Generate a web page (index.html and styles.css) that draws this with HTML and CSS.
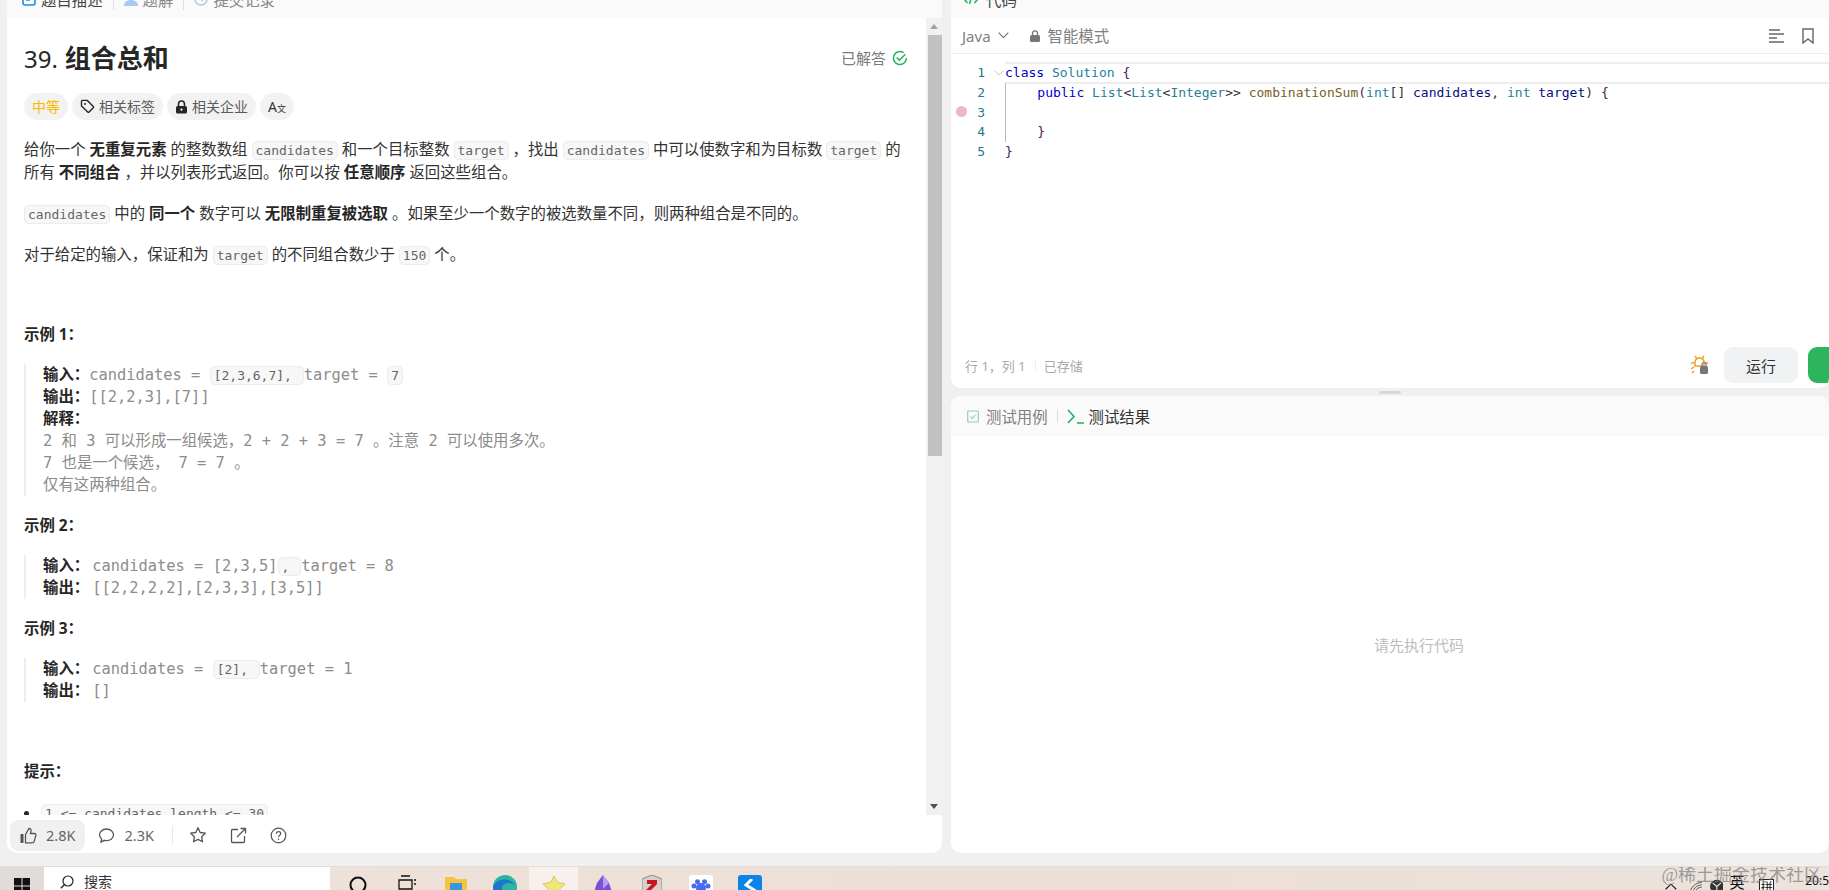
FILE: index.html
```html
<!DOCTYPE html>
<html lang="zh-CN">
<head>
    <meta charset="UTF-8">
    <title>39. 组合总和</title>
    <link rel="stylesheet" href="styles.css">
</head>
<body>
    <div class="main">
        <!-- pannello sinistro: descrizione -->
        <section class="panel-left">
            <div class="strip">
                <div class="tab">
                    <svg class="icon-tab" viewBox="0 0 14 14"><rect x="1" y="1" width="12" height="12" rx="2" fill="none" stroke="#1a90e0" stroke-width="1.6"/><path d="M4 5h6M4 8h4" stroke="#1a90e0" stroke-width="1.4"/></svg>
                    <span class="tab-text">题目描述</span>
                </div>
                <i class="tab-sep"></i>
                <div class="tab">
                    <svg class="icon-tab" viewBox="0 0 14 14"><circle cx="7" cy="4" r="3.4" fill="#a9c9f0"/><path d="M0 14c0-4 3-6 7-6s7 2 7 6z" fill="#a9c9f0"/></svg>
                    <span class="tab-text tab-dim">题解</span>
                </div>
                <i class="tab-sep"></i>
                <div class="tab">
                    <svg class="icon-tab" viewBox="0 0 14 14"><path d="M7 1a6 6 0 1 1-6 6" fill="none" stroke="#a9c9f0" stroke-width="1.5"/><path d="M7 4v3l2 2" fill="none" stroke="#a9c9f0" stroke-width="1.4"/></svg>
                    <span class="tab-text tab-dim">提交记录</span>
                </div>
            </div>

            <div class="desc-wrap">
                <div class="desc">
                    <div class="title-row">
                        <h1 class="title"><span class="title-num">39.</span> 组合总和</h1>
                        <div class="solved">
                            已解答
                            <svg width="16" height="16" viewBox="0 0 16 16"><path d="M14.5 8A6.5 6.5 0 1 1 11.6 2.6" fill="none" stroke="#1db45a" stroke-width="1.5"/><path d="M4.8 7.6l2.6 2.6 6-6" fill="none" stroke="#1db45a" stroke-width="1.5"/></svg>
                        </div>
                    </div>

                    <div class="tags">
                        <span class="tag tag-level">中等</span>
                        <span class="tag">
                            <svg width="15" height="15" viewBox="0 0 15 15"><path d="M1.5 2.2a.8.8 0 0 1 .8-.8h5l6 6a1 1 0 0 1 0 1.4l-4.2 4.2a1 1 0 0 1-1.4 0l-6.2-6z" fill="none" stroke="#262626" stroke-width="1.4"/><circle cx="5" cy="5" r="1" fill="#262626"/></svg>
                            相关标签
                        </span>
                        <span class="tag">
                            <svg width="13" height="14" viewBox="0 0 13 14"><path d="M3.5 6V4a3 3 0 0 1 6 0v2" fill="none" stroke="#262626" stroke-width="1.6"/><rect x="1" y="6" width="11" height="7.5" rx="1.6" fill="#262626"/><circle cx="6.5" cy="9.7" r="1.1" fill="#fff"/></svg>
                            相关企业
                        </span>
                        <span class="tag tag-lang">A<small>文</small></span>
                    </div>

                    <p>给你一个 <b>无重复元素</b> 的整数数组 <code>candidates</code> 和一个目标整数 <code>target</code> &#65292;找出 <code>candidates</code> 中可以使数字和为目标数 <code>target</code> 的<br>所有 <b>不同组合</b> &#65292;并以列表形式返回。你可以按 <b>任意顺序</b> 返回这些组合。</p>
                    <p><code>candidates</code> 中的 <b>同一个</b> 数字可以 <b>无限制重复被选取</b> 。如果至少一个数字的被选数量不同&#65292;则两种组合是不同的。</p>
                    <p>对于给定的输入&#65292;保证和为 <code>target</code> 的不同组合数少于 <code>150</code> 个。</p>

                    <h4 class="example-title first">示例 1&#65306;</h4>
                    <pre class="example"><strong>输入&#65306;</strong>candidates = <code>[2,3,6,7], </code>target = <code>7</code>
<strong>输出&#65306;</strong>[[2,2,3],[7]]
<strong>解释&#65306;</strong>
2 和 3 可以形成一组候选&#65292;2 + 2 + 3 = 7 。注意 2 可以使用多次。
7 也是一个候选&#65292; 7 = 7 。
仅有这两种组合。</pre>

                    <h4 class="example-title">示例 2&#65306;</h4>
                    <pre class="example"><strong class="label-gap">输入&#65306;</strong>candidates = [2,3,5]<code>, </code>target = 8
<strong class="label-gap">输出&#65306;</strong>[[2,2,2,2],[2,3,3],[3,5]]</pre>

                    <h4 class="example-title">示例 3&#65306;</h4>
                    <pre class="example"><strong class="label-gap">输入&#65306;</strong>candidates = <code>[2], </code>target = 1
<strong class="label-gap">输出&#65306;</strong>[]</pre>

                    <h4 class="example-title hint">提示&#65306;</h4>
                    <ul class="hints">
                        <li><code>1 &lt;= candidates.length &lt;= 30</code></li>
                    </ul>
                </div>
                <div class="scrollbar">
                    <div class="scroll-btn"><i class="arrow-up"></i></div>
                    <div class="scroll-thumb"></div>
                    <div class="scroll-rest"></div>
                    <div class="scroll-btn"><i class="arrow-down"></i></div>
                </div>
            </div>

            <div class="actions">
                <div class="action action-like">
                    <svg width="17" height="17" viewBox="0 0 17 17"><rect x="0.5" y="7" width="3" height="9" rx="0.8" fill="#555"/><path d="M5.5 7.5L9 1.5c1.5 0 2.2 1 2 2.4L10.5 6.5h4c1 0 1.7.9 1.4 1.9l-1.8 6.2c-.2.8-.9 1.3-1.7 1.3H5.5z" fill="none" stroke="#555" stroke-width="1.3"/></svg>
                    2.8K
                </div>
                <div class="action">
                    <svg width="17" height="17" viewBox="0 0 17 17"><path d="M8.5 2C4.5 2 1.5 4.5 1.5 7.8c0 1.7.8 3.1 2.1 4.2L3 15l3.4-1.7c.7.2 1.4.3 2.1.3 4 0 7-2.5 7-5.8S12.5 2 8.5 2z" fill="none" stroke="#555" stroke-width="1.3"/></svg>
                    2.3K
                </div>
                <i class="action-sep"></i>
                <svg class="action-icon" width="18" height="18" viewBox="0 0 18 18"><path d="M9 1.8l2.2 4.7 5.1.7-3.7 3.5.9 5.1L9 13.4l-4.5 2.4.9-5.1L1.7 7.2l5.1-.7z" fill="none" stroke="#555" stroke-width="1.3" stroke-linejoin="round"/></svg>
                <svg class="action-icon" width="17" height="17" viewBox="0 0 17 17"><path d="M8 2.5H2.5a1 1 0 0 0-1 1v11a1 1 0 0 0 1 1h11a1 1 0 0 0 1-1V9M7 10l8.5-8.5M10.5 1.5h5v5" fill="none" stroke="#555" stroke-width="1.3"/></svg>
                <svg class="action-icon" width="17" height="17" viewBox="0 0 17 17"><circle cx="8.5" cy="8.5" r="7.3" fill="none" stroke="#555" stroke-width="1.2"/><path d="M6.3 6.7c0-1.3 1-2.1 2.2-2.1s2.2.8 2.2 2c0 1.8-2.2 1.7-2.2 3.6" fill="none" stroke="#555" stroke-width="1.2"/><circle cx="8.5" cy="12.3" r=".8" fill="#555"/></svg>
            </div>
        </section>

        <!-- pannello destro: editor e test -->
        <section class="panel-right">
            <div class="panel-code">
                <div class="strip">
                    <div class="tab tab-code">
                        <svg class="icon-code" viewBox="0 0 16 12"><path d="M4.5 2L1 6l3.5 4M11.5 2L15 6l-3.5 4M9.5 1L6.5 11" fill="none" stroke="#1db45a" stroke-width="1.5"/></svg>
                        <span class="tab-text">代码</span>
                    </div>
                </div>

                <div class="toolbar">
                    <span class="lang">Java</span>
                    <svg class="chevron" width="11" height="7" viewBox="0 0 11 7"><path d="M.7.7l4.8 5 4.8-5" fill="none" stroke="#777" stroke-width="1.2"/></svg>
                    <svg class="lock" width="10" height="12" viewBox="0 0 10 12"><path d="M2.5 5V3.3a2.5 2.5 0 0 1 5 0V5" fill="none" stroke="#777" stroke-width="1.3"/><rect y="5" width="10" height="7" rx="1.5" fill="#777"/></svg>
                    <span class="mode">智能模式</span>
                    <svg class="tool-a" width="15" height="14" viewBox="0 0 15 14"><path d="M0 1h11M0 5h15M0 9h8M0 13h15" stroke="#666" stroke-width="1.3"/></svg>
                    <svg class="tool-b" width="12" height="16" viewBox="0 0 12 16"><path d="M1 1h10v14l-5-4-5 4z" fill="none" stroke="#666" stroke-width="1.4"/></svg>
                </div>

                <div class="editor">
                    <div class="line">
                        <span class="ln">1</span><svg class="fold" width="10" height="6" viewBox="0 0 10 6"><path d="M.5.5L5 5 9.5.5" fill="none" stroke="#c8c8c8"/></svg>
                        <code class="src src-active"><span class="kw">class</span> <span class="ty">Solution</span> <span class="br">{</span></code>
                    </div>
                    <div class="line">
                        <span class="ln">2</span>
                        <code class="src src-guide">    <span class="kw">public</span> <span class="ty">List</span>&lt;<span class="ty">List</span>&lt;<span class="ty">Integer</span>&gt;&gt; <span class="fn">combinationSum</span><span class="br">(</span><span class="ty">int</span>[] <span class="va">candidates</span>, <span class="ty">int</span> <span class="va">target</span><span class="br">)</span> <span class="br">{</span></code>
                    </div>
                    <div class="line">
                        <i class="breakpoint"></i><span class="ln">3</span>
                        <code class="src src-guide"> </code>
                    </div>
                    <div class="line">
                        <span class="ln">4</span>
                        <code class="src src-guide">    <span class="br">}</span></code>
                    </div>
                    <div class="line">
                        <span class="ln">5</span>
                        <code class="src"><span class="br">}</span></code>
                    </div>
                </div>

                <div class="statusbar">
                    <span class="status">行 1&#65292;列 1</span>
                    <i class="status-sep"></i>
                    <span class="status">已存储</span>
                    <svg class="bug" width="20" height="20" viewBox="0 0 20 20"><path d="M7 4L5 1M12 4l2-3M4 8H1M4 12l-3 2M4 16l-2 2M15 8h3" stroke="#f0a020" stroke-width="1.5" fill="none"/><path d="M5 7c0-2 2-4 4.5-4S14 5 14 7v4H5z" fill="none" stroke="#f0a020" stroke-width="1.5"/><rect x="10" y="11" width="8" height="8" rx="1.5" fill="#777"/><path d="M12 11V9.5a2 2 0 0 1 4 0V11" fill="none" stroke="#777" stroke-width="1.2"/></svg>
                    <button class="btn-run">运行</button>
                    <button class="btn-submit"></button>
                </div>
            </div>

            <div class="handle"><i></i></div>

            <div class="panel-test">
                <div class="test-tabs">
                    <svg width="12" height="13" viewBox="0 0 12 13"><rect x=".7" y="1" width="10.6" height="11" rx="1" fill="none" stroke="#8fd4a8" stroke-width="1.2"/><path d="M3.5 6.5l2 2 3-3.5" fill="none" stroke="#8fd4a8" stroke-width="1.1"/></svg>
                    <span class="test-tab test-dim">测试用例</span>
                    <i class="test-sep"></i>
                    <svg class="icon-term" width="17" height="15" viewBox="0 0 17 15"><path d="M1 1l6 6.500L1 14M10 14h7" fill="none" stroke="#1db45a" stroke-width="1.6"/></svg>
                    <span class="test-tab">测试结果</span>
                </div>
                <div class="test-body">请先执行代码</div>
            </div>
        </section>
    </div>

    <!-- barra di windows in basso -->
    <footer class="taskbar">
        <div class="start">
            <svg width="16" height="16" viewBox="0 0 16 16"><path d="M0 0h7.5v7.5H0zM8.5 0H16v7.5H8.5zM0 8.5h7.5V16H0zM8.5 8.5H16V16H8.5z" fill="#111"/></svg>
        </div>
        <div class="search">
            <svg width="14" height="14" viewBox="0 0 14 14"><circle cx="8" cy="6" r="5" fill="none" stroke="#222" stroke-width="1.2"/><path d="M4.5 9.5L.8 13.3" stroke="#222" stroke-width="1.3"/></svg>
            <span>搜索</span>
        </div>
        <div class="apps">
            <div class="app"><svg width="20" height="20" viewBox="0 0 20 20"><circle cx="10" cy="10" r="7.5" fill="none" stroke="#111" stroke-width="2"/></svg></div>
            <div class="app"><svg width="18" height="18" viewBox="0 0 18 18"><path d="M1 5h13v9H1zM3 1h9M16 5h2M16 9h2" fill="none" stroke="#111" stroke-width="1.3"/></svg></div>
            <div class="app"><svg width="22" height="20" viewBox="0 0 22 20"><path d="M0 2h9l2 2h11v16H0z" fill="#f5c542"/><rect x="5" y="8" width="12" height="12" fill="#3a96dd"/></svg></div>
            <div class="app"><svg width="24" height="24" viewBox="0 0 24 24"><circle cx="12" cy="12" r="12" fill="#2ab5a5"/><path d="M0 12C2 3 18 2 22 10c-4-3-12-3-13 3 0 4 4 8 9 8-9 6-18-1-18-9z" fill="#1d78c8"/></svg></div>
            <div class="app app-active"><svg width="24" height="22" viewBox="0 0 24 22"><path d="M12 1l3.5 6.5 7.5 1.3-5.3 5.3L19 22 12 18.5 5 22l1.3-7.9L1 8.800l7.500-1.300z" fill="#f0e678" stroke="#d8c860"/></svg></div>
            <div class="app"><svg width="18" height="24" viewBox="0 0 18 24"><path d="M9 0l6 8 3 9-9 7-9-7 3-9z" fill="#7b4fd8"/><path d="M9 0l6 8-6 6z" fill="#b79cf0"/></svg></div>
            <div class="app"><svg width="20" height="24" viewBox="0 0 20 24"><path d="M10 0l10 4v16H0V4z" fill="#d8d0cc" stroke="#888"/><path d="M5 5h10v4l-6 6h6v4H4v-4l6-6H5z" fill="#c8161d"/></svg></div>
            <div class="app"><div class="app-tile app-tile-white"><svg width="20" height="14" viewBox="0 0 20 14"><circle cx="10" cy="9" r="5" fill="#4a6af0"/><circle cx="3" cy="7" r="2.5" fill="#4a6af0"/><circle cx="17" cy="7" r="2.5" fill="#4a6af0"/><circle cx="6.5" cy="2.8" r="2.5" fill="#4a6af0"/><circle cx="13.5" cy="2.8" r="2.5" fill="#4a6af0"/></svg></div></div>
            <div class="app"><div class="app-tile app-tile-blue"><svg width="14" height="20" viewBox="0 0 14 20"><path d="M9 0L3 6l8 5-6 8" fill="none" stroke="#fff" stroke-width="3"/></svg></div></div>
        </div>
        <div class="tray">
            <svg width="13" height="7" viewBox="0 0 13 7"><path d="M.7 6.5L6.5 1l5.8 5.5" fill="none" stroke="#111" stroke-width="1.2"/></svg>
            <svg class="tray-wifi" width="14" height="14" viewBox="0 0 16 16"><path d="M1 16C1 8 8 1 16 1M4 16c0-6 6-12 12-12M7 16c0-5 4-9 9-9" fill="none" stroke="#333" stroke-width="1"/></svg>
            <svg class="tray-ball" width="15" height="15" viewBox="0 0 15 15"><circle cx="7.5" cy="7.5" r="7.5" fill="#333"/><path d="M7.5 7.5L3 3.5M7.5 7.5l4.5-4M7.5 7.5V14" stroke="#eee" stroke-width="1.2"/></svg>
            <span class="tray-ime">英</span>
            <span class="tray-box">拼</span>
            <span class="tray-time">20:5</span>
        </div>
        <div class="watermark">@稀土掘金技术社区</div>
    </footer>
</body>
</html>
```

FILE: styles.css
```css
* {
    box-sizing: border-box;
}

html, body {
    margin: 0;
    height: 890px;
    overflow: hidden;
}

body {
    width: 1829px;
    display: flex;
    flex-direction: column;
    background-color: #f0f0f0;
    color: #262626;
    font-family: "Noto Sans", "Noto Sans CJK SC", sans-serif;
    font-size: 15.4px;
}

.main {
    height: 866px;
    display: flex;
    padding: 0 0 13px 7px;
    gap: 9px;
}

/* pannelli */
.panel-left {
    width: 935px;
    display: flex;
    flex-direction: column;
    background-color: #fff;
    border-radius: 0 0 10px 10px;
    overflow: hidden;
}

.panel-right {
    flex: 1;
    display: flex;
    flex-direction: column;
    min-width: 0;
}

.panel-code {
    height: 388px;
    display: flex;
    flex-direction: column;
    background-color: #fff;
    border-radius: 0 0 10px 10px;
    overflow: hidden;
}

.panel-test {
    flex: 1;
    display: flex;
    flex-direction: column;
    background-color: #fff;
    border-radius: 10px;
    overflow: hidden;
}

/* striscia delle schede, tagliata in alto */
.strip {
    height: 18px;
    flex-shrink: 0;
    display: flex;
    align-items: flex-end;
    padding-left: 15px;
    background-color: #fafafa;
    overflow: hidden;
}

.tab {
    display: flex;
    align-items: center;
    gap: 5px;
    height: 24px;
    margin-bottom: 7px;
    flex-shrink: 0;
}

.tab-code {
    gap: 7px;
    margin-left: -3px;
}

.icon-tab {
    width: 14px;
    height: 14px;
}

.icon-code {
    width: 16px;
    height: 12px;
}

.tab-text {
    color: #444;
}

.tab-dim {
    color: #888;
}

.tab-sep {
    width: 1px;
    height: 14px;
    margin: 0 10px 8px 10px;
    background-color: #e0e0e0;
    flex-shrink: 0;
}

/* descrizione */
.desc-wrap {
    flex: 1;
    min-height: 0;
    display: flex;
    overflow: hidden;
}

.desc {
    flex: 1;
    min-width: 0;
    padding: 24px 17px 0 17px;
    overflow: hidden;
    line-height: 23px;
}

.title-row {
    display: flex;
    justify-content: space-between;
    align-items: center;
    height: 32px;
    padding-right: 1px;
}

.title {
    margin: 0;
    font-size: 26px;
    font-weight: 700;
    line-height: 32px;
}

.title-num {
    font-size: 24px;
    font-weight: 400;
}

.solved {
    display: flex;
    align-items: center;
    gap: 6px;
    color: #7a7a7a;
    font-size: 15px;
}

.tags {
    display: flex;
    gap: 4px;
    margin: 19px 0 18px;
}

.tag {
    display: flex;
    align-items: center;
    gap: 4px;
    height: 27px;
    padding: 0 8px;
    border-radius: 14px;
    background-color: #f2f2f2;
    color: #5c5c5c;
    font-size: 14px;
}

.tag-level {
    color: #ffb800;
}

.tag-lang {
    gap: 0;
    color: #333;
}

.tag-lang small {
    font-size: 9px;
    margin-top: 3px;
}

.desc p {
    margin: 0 0 18px;
    color: #333;
}

.desc b {
    color: #262626;
}

code {
    font-family: "DejaVu Sans Mono", monospace;
}

.desc code {
    padding: 1px 3px;
    font-size: 13px;
    line-height: 1;
    color: #666;
    background-color: #f7f7f7;
    border: 1px solid #ececec;
    border-radius: 5px;
}

.example-title {
    margin: 0 0 18px;
    font-size: 15.4px;
    font-weight: 700;
    line-height: 23px;
}

.example-title.first {
    margin-top: 57px;
}

.example-title.hint {
    margin-top: 58px;
}

.example {
    margin: 0 0 18px;
    padding-left: 17px;
    border-left: 2px solid #eee;
    font-family: "DejaVu Sans Mono", "Noto Sans CJK SC", monospace;
    font-size: 15.4px;
    line-height: 22px;
    color: #8c8c8c;
}

.example strong {
    font-family: "Noto Sans CJK SC", sans-serif;
    line-height: 1;
    color: #262626;
}

.example strong.label-gap {
    margin-right: 3px;
}

.hints {
    margin: 0;
    padding-left: 17px;
}

/* scrollbar finta */
.scrollbar {
    width: 16px;
    display: flex;
    flex-direction: column;
    background-color: #f1f1f1;
    flex-shrink: 0;
}

.scroll-btn {
    height: 17px;
    display: flex;
    align-items: center;
    justify-content: center;
}

.arrow-up {
    border: 4px solid transparent;
    border-top: 0;
    border-bottom: 5px solid #a3a3a3;
}

.arrow-down {
    border: 4px solid transparent;
    border-bottom: 0;
    border-top: 5px solid #505050;
}

.scroll-thumb {
    height: 421px;
    margin-left: 2px;
    background-color: #c1c1c1;
}

.scroll-rest {
    flex: 1;
}

/* azioni in fondo */
.actions {
    height: 38px;
    flex-shrink: 0;
    display: flex;
    align-items: center;
    padding: 2px 0 0 3px;
    color: #666;
    font-size: 14.5px;
}

.action {
    display: flex;
    align-items: center;
    gap: 9px;
    height: 31px;
    padding: 0 10px;
    margin-right: 3px;
}

.action-like {
    background-color: #f0f0f0;
    border-radius: 8px;
}

.action-sep {
    width: 1px;
    height: 18px;
    margin: 0 16px 0 5px;
    background-color: #e8e8e8;
}

.action-icon {
    margin-right: 23px;
}

/* editor */
.toolbar {
    height: 36px;
    flex-shrink: 0;
    display: flex;
    align-items: center;
    padding: 0 15px 0 11px;
    border-bottom: 1px solid #eee;
    color: #808080;
}

.lang {
    font-size: 15px;
}

.chevron {
    margin-left: 7px;
}

.lock {
    margin-left: 21px;
}

.mode {
    margin-left: 8px;
}

.tool-a {
    margin-left: auto;
}

.tool-b {
    margin-left: 18px;
}

.editor {
    flex: 1;
    padding-top: 9px;
    min-height: 0;
}

.line {
    position: relative;
    height: 19.7px;
    display: flex;
    align-items: center;
    padding-left: 2px;
}

.ln {
    width: 32px;
    text-align: right;
    font-family: "DejaVu Sans Mono", monospace;
    font-size: 13px;
    color: #237893;
}

.fold {
    position: absolute;
    left: 43px;
    top: 7px;
}

.breakpoint {
    position: absolute;
    left: 5px;
    top: 4px;
    width: 11px;
    height: 11px;
    border-radius: 50%;
    background-color: #e8b9c0;
}

.src {
    flex: 1;
    height: 100%;
    margin-left: 20px;
    font-size: 13px;
    line-height: 19.7px;
    white-space: pre;
    color: #333;
}

.src-active {
    box-shadow: inset 0 1px 0 #eee, inset 0 -1px 0 #eee, 0 -1px 0 #eee, 0 1px 0 #eee;
}

.src-guide {
    border-left: 1px solid #b8b8b8;
}

.kw { color: #0000cc; }
.ty { color: #267f99; }
.fn { color: #795e26; }
.va { color: #001080; }
.br { color: #4b1a4b; }

.statusbar {
    height: 45px;
    flex-shrink: 0;
    display: flex;
    align-items: center;
    padding: 0 0 1px 14px;
    font-size: 13px;
    color: #aaa;
}

.status-sep {
    width: 1px;
    height: 12px;
    margin: 0 8px 0 9px;
    background-color: #eee;
}

.bug {
    margin-left: auto;
    margin-right: 14px;
}

.btn-run, .btn-submit {
    height: 36px;
    border: 0;
    padding: 0;
    font-family: inherit;
    font-size: 15px;
}

.btn-run {
    width: 74px;
    border-radius: 9px;
    background-color: #f1f2f3;
    color: #333;
}

.btn-submit {
    width: 21px;
    margin-left: 10px;
    border-radius: 9px 0 0 9px;
    background-color: #2db55d;
}

/* maniglia tra editor e test */
.handle {
    height: 8px;
    flex-shrink: 0;
    display: flex;
    align-items: center;
    justify-content: center;
}

.handle i {
    width: 22px;
    height: 3px;
    border-radius: 2px;
    background-color: #d8d8d8;
}

.test-tabs {
    height: 40px;
    flex-shrink: 0;
    display: flex;
    align-items: center;
    padding-left: 16px;
    background-color: #fafafa;
}

.test-tab {
    margin-left: 7px;
    color: #333;
}

.test-dim {
    color: #808080;
}

.test-sep {
    width: 1px;
    height: 14px;
    margin: 0 9px;
    background-color: #ddd;
}

.icon-term {
    margin-right: -2px;
}

.test-body {
    flex: 1;
    display: flex;
    align-items: center;
    justify-content: center;
    padding-left: 58px;
    font-size: 15px;
    color: #bdbdbd;
}

/* taskbar */
.taskbar {
    position: relative;
    height: 24px;
    display: flex;
    overflow: hidden;
    background: linear-gradient(90deg, #eee2da, #ecdfd6 60%, #ebe3dd);
    border-top: 1px solid #e4dcd6;
}

.start {
    width: 44px;
    height: 40px;
    display: flex;
    justify-content: center;
    padding-top: 11px;
    background-color: #e2dcd8;
}

.search {
    width: 286px;
    height: 40px;
    display: flex;
    gap: 10px;
    padding: 5px 0 0 16px;
    background-color: #fff;
    align-items: flex-start;
    font-size: 14px;
    line-height: 20px;
    color: #333;
}

.search svg {
    margin-top: 3px;
}

.apps {
    display: flex;
    margin-left: 3px;
}

.app {
    width: 49px;
    height: 48px;
    display: flex;
    justify-content: center;
    padding-top: 8px;
}

.app-active {
    background-color: #f7f0ec;
}

.app-tile {
    width: 24px;
    height: 24px;
    border-radius: 3px;
    display: flex;
    justify-content: center;
    padding-top: 4px;
}

.app-tile-white {
    background-color: #fff;
}

.app-tile-blue {
    background-color: #0a84e8;
}

.tray {
    margin-left: auto;
    display: flex;
    align-items: flex-start;
    width: 164px;
    flex-shrink: 0;
    font-size: 15px;
    color: #111;
}

.tray svg:first-child {
    margin-top: 16px;
}

.tray-wifi {
    margin: 14px 0 0 12px;
}

.tray-ball {
    margin: 12px 0 0 8px;
}

.tray-ime {
    margin: 5px 0 0 6px;
    line-height: 20px;
}

.tray-box {
    margin: 12px 0 0 15px;
    width: 16px;
    height: 20px;
    border: 1px solid #222;
    background-color: #fff;
    font-size: 12px;
    line-height: 16px;
    text-align: center;
}

.tray-time {
    margin: 4px 0 0 31px;
    font-size: 12px;
    line-height: 20px;
    white-space: nowrap;
}

/* il watermark sta sopra la barra */
.watermark {
    position: absolute;
    right: 7px;
    top: -4px;
    font-family: "Liberation Serif", "Noto Sans CJK SC", serif;
    font-size: 18px;
    line-height: 24px;
    color: rgba(120, 120, 120, 0.7);
}
```
